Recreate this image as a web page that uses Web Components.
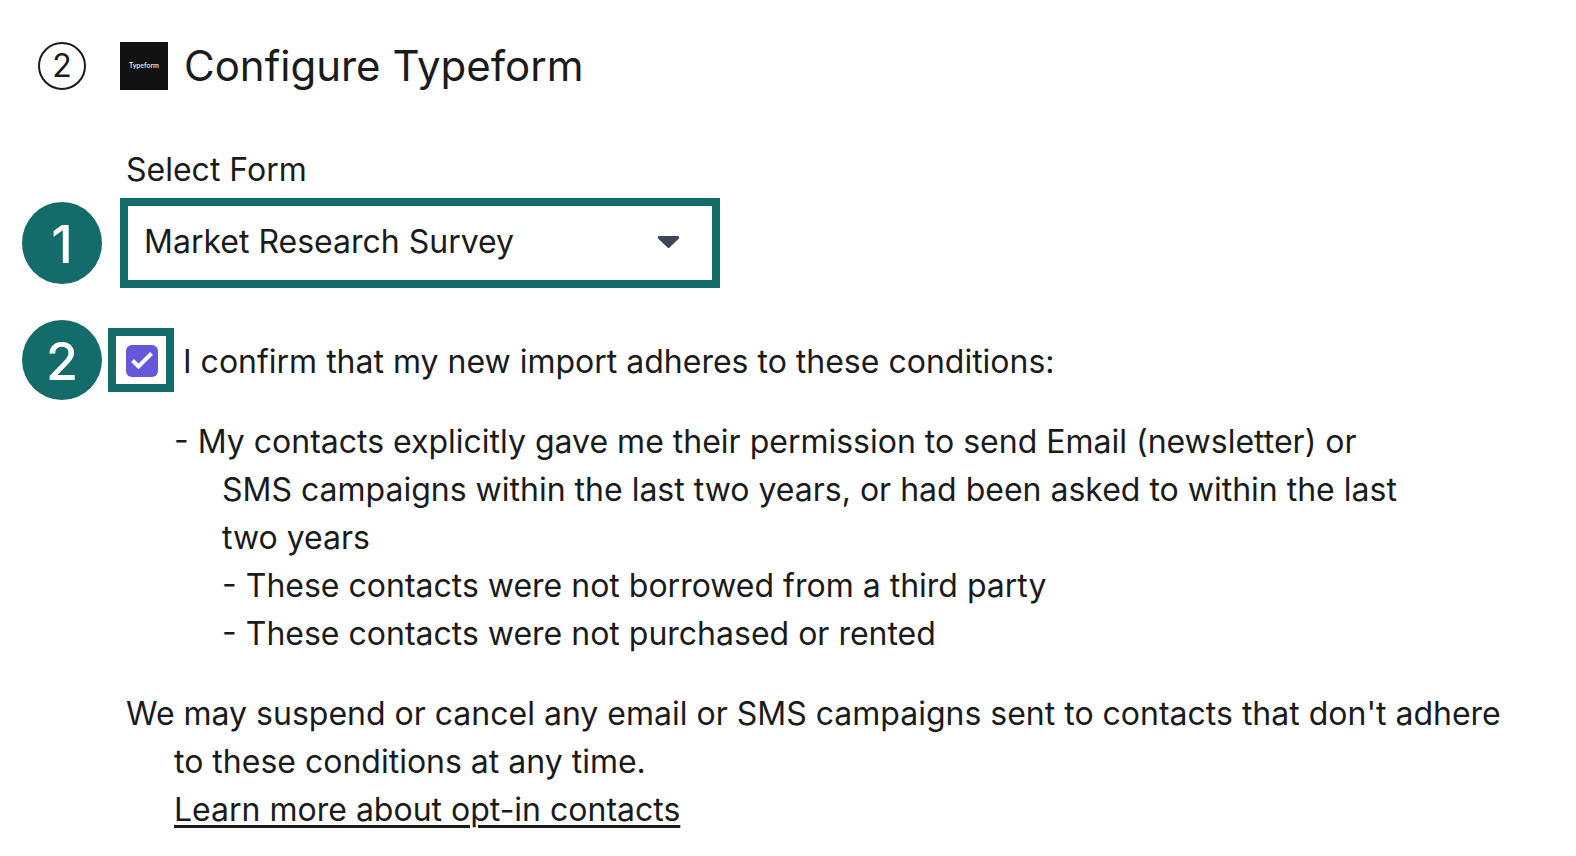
<!DOCTYPE html>
<html lang="en"><head><meta charset="utf-8"><title>Configure Typeform</title>
<style>
body{margin:0;background:#fff;color:#1b1b1b;font:32px/48px Inter,"Liberation Sans",sans-serif}
a{color:inherit;text-decoration-thickness:3px;text-underline-offset:4px}
</style></head><body>
<setup-step>
<step-header slot="header" number="2">Configure Typeform</step-header>
<form-select number="1" label="Select Form" value="Market Research Survey"></form-select>
<confirm-check number="2">I confirm that my new import adheres to these conditions:</confirm-check>
<condition-list>
<div>- My contacts explicitly gave me their permission to send Email (newsletter) or SMS campaigns within the last two years, or had been asked to within the last two years</div>
<div>- These contacts were not borrowed from a third party</div>
<div>- These contacts were not purchased or rented</div>
</condition-list>
<opt-in-note>We may suspend or cancel any email or SMS campaigns sent to contacts that don't adhere to these conditions at any time.<a slot="link" href="#opt-in">Learn more about opt-in contacts</a></opt-in-note>
</setup-step>
<script>
const define=(name,html,init)=>customElements.define(name,class extends HTMLElement{
 constructor(){super();this.attachShadow({mode:"open"}).innerHTML=html}
 connectedCallback(){if(init)init(this,this.shadowRoot)}
});
define("setup-step",`<style>:host{display:block;padding:40px 38px 24px}.body{padding-left:88px}</style><slot name="header"></slot><div class="body"><slot></slot></div>`);
define("step-header",`<style>:host{display:flex;align-items:center;height:52px}
.num{box-sizing:border-box;width:48px;height:48px;border:2px solid #1b1b1b;border-radius:50%;text-align:center;line-height:44px}
svg{margin:0 16px 0 34px}h1{margin:0;font-size:42px;line-height:52px;font-weight:400}
</style><span class="num"></span><svg width="48" height="48" role="img" aria-label="Typeform"><rect width="48" height="48" fill="#121212"/><text x="24" y="26" text-anchor="middle" font-size="7" font-family="Lato,sans-serif" font-weight="700" fill="#ddd">Typeform</text></svg><h1><slot></slot></h1>`,(h,r)=>r.querySelector(".num").textContent=h.getAttribute("number"));
define("callout-badge",`<style>:host{box-sizing:border-box;display:grid;place-items:center;width:80px;height:80px;padding-top:4px;border-radius:50%;background:#136b6a;color:#fff;font-size:52px;font-weight:500;flex:none}</style><slot></slot>`);
define("form-select",`<style>:host{display:block;margin-top:54px}label{display:block}
.row{display:flex;align-items:center;margin:4px 0 0 -104px;gap:18px}
callout-badge{height:82px}
.box{width:600px;display:grid;align-items:center}.box>*{grid-area:1/1}
select{appearance:none;width:100%;height:90px;box-sizing:border-box;border:8px solid #136b6a;border-radius:0;background:#fff;color:inherit;font:inherit;padding:0 16px 2px}
svg{justify-self:end;margin:0 40px 2px 0;pointer-events:none}
</style><label for="f"></label><div class="row"><callout-badge></callout-badge><div class="box"><select id="f"><option></option></select><svg width="22" height="12"><path d="M1 0h19q1 0 1 1v1.500L11.500 11.500q-1 1-2 0L0 2.500V1q0-1 1-1z" fill="#3c4858"/></svg></div></div>`,(h,r)=>{r.querySelector("label").textContent=h.getAttribute("label");r.querySelector("option").textContent=h.getAttribute("value");r.querySelector("callout-badge").textContent=h.getAttribute("number")});
define("confirm-check",`<style>:host{display:flex;align-items:center;margin:32px 0 0 -104px}
.frame{box-sizing:border-box;width:66px;height:64px;border:8px solid #136b6a;padding:2px 0 0 2px;margin:0 9px 0 6px;display:grid;place-items:center;flex:none}
input{appearance:none;margin:0;width:32px;height:32px;border-radius:6px;background:#6558dc}
label{padding-top:4px}
.frame>*{grid-area:1/1}svg{pointer-events:none;z-index:1}
</style><callout-badge></callout-badge><span class="frame"><input id="c" type="checkbox" checked><svg width="24" height="24"><path d="M2.500 11.500l6 6L21.500 4.500" fill="none" stroke="#fff" stroke-width="4"/></svg></span><label for="c"><slot></slot></label>`,(h,r)=>r.querySelector("callout-badge").textContent=h.getAttribute("number"));
define("condition-list",`<style>:host{display:block;margin:18px 128px 0 96px}::slotted(:first-child){text-indent:-48px}</style><slot></slot>`);
define("opt-in-note",`<style>:host{display:block;margin:32px 0 0 48px}p{margin:0;text-indent:-48px}</style><p><slot></slot></p><slot name="link"></slot>`);
</script></body></html>
